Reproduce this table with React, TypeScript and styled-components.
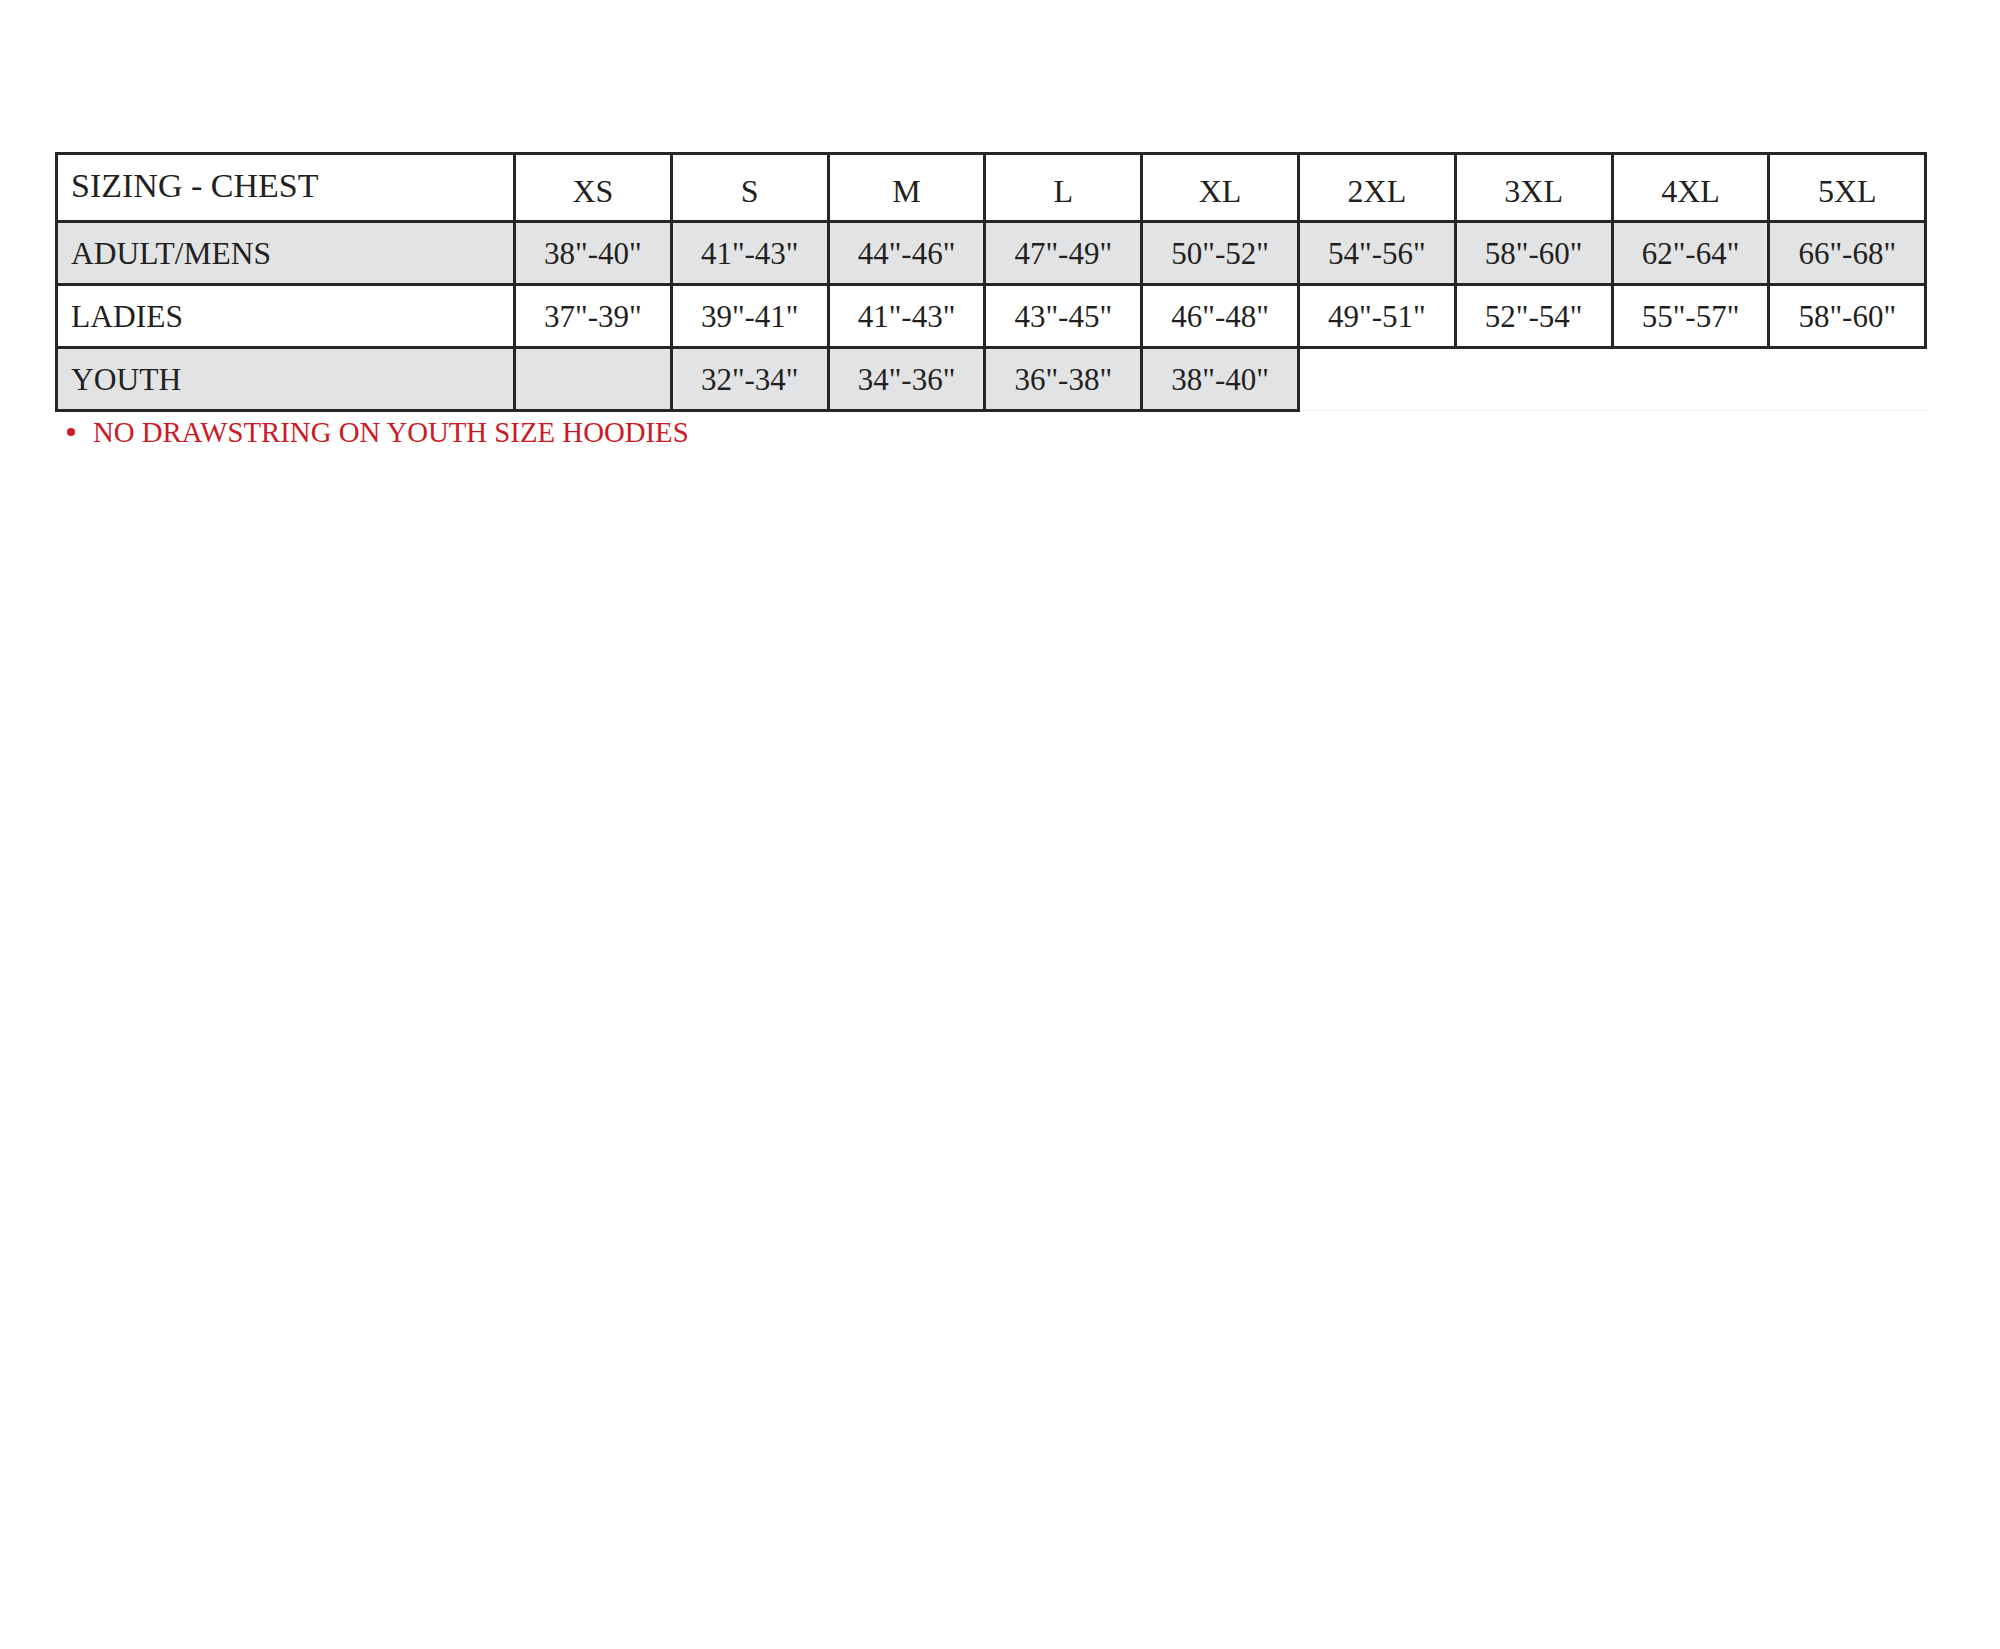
import { createGlobalStyle } from 'styled-components';
import styled from 'styled-components';

const sizes = ['XS', 'S', 'M', 'L', 'XL', '2XL', '3XL', '4XL', '5XL'];

const rows: { label: string; values: (string | null)[]; shaded: boolean }[] = [
  {
    label: 'ADULT/MENS',
    values: ['38"-40"', '41"-43"', '44"-46"', '47"-49"', '50"-52"', '54"-56"', '58"-60"', '62"-64"', '66"-68"'],
    shaded: true,
  },
  {
    label: 'LADIES',
    values: ['37"-39"', '39"-41"', '41"-43"', '43"-45"', '46"-48"', '49"-51"', '52"-54"', '55"-57"', '58"-60"'],
    shaded: false,
  },
  {
    label: 'YOUTH',
    values: ['', '32"-34"', '34"-36"', '36"-38"', '38"-40"', null, null, null, null],
    shaded: true,
  },
];

function App() {
  return (
    <>
      <GlobalStyle />
      <S.Page>
        <S.Table>
          <colgroup>
            <col style={{ width: 458 }} />
            {sizes.map((s) => (
              <col key={s} style={{ width: 156.8 }} />
            ))}
          </colgroup>
          <thead>
            <S.HeadRow>
              <S.LabelHead>SIZING - CHEST</S.LabelHead>
              {sizes.map((s) => (
                <S.SizeHead key={s}>{s}</S.SizeHead>
              ))}
            </S.HeadRow>
          </thead>
          <tbody>
            {rows.map((row) => (
              <S.Row key={row.label} $shaded={row.shaded}>
                <S.Label>{row.label}</S.Label>
                {row.values.map((v, i) =>
                  v === null ? <S.Blank key={i} /> : <S.Cell key={i}>{v}</S.Cell>,
                )}
              </S.Row>
            ))}
          </tbody>
        </S.Table>
        <S.Note>
          <S.Dot />
          NO DRAWSTRING ON YOUTH SIZE HOODIES
        </S.Note>
      </S.Page>
    </>
  );
}

export default App;

const GlobalStyle = createGlobalStyle`
  html, body {
    margin: 0;
    padding: 0;
    background: #ffffff;
  }
  body {
    font-family: "Liberation Serif", "Times New Roman", serif;
    color: #231f20;
  }
`;

const S = {
  Page: styled.div`
    width: 2000px;
    min-height: 1649px;
    box-sizing: border-box;
    padding: 152px 0 0 55px;
  `,
  Table: styled.table`
    border-collapse: collapse;
    table-layout: fixed;
    width: 1869px;
    font-family: "Liberation Serif", "Times New Roman", serif;
    color: #231f20;
  `,
  HeadRow: styled.tr`
    height: 68px;
    background: #ffffff;
  `,
  LabelHead: styled.th`
    border: 3px solid #262626;
    padding: 0 0 4px 13px;
    text-align: left;
    font-weight: normal;
    font-size: 34px;
  `,
  SizeHead: styled.th`
    border: 3px solid #262626;
    padding: 7px 0 0;
    text-align: center;
    font-weight: normal;
    font-size: 32px;
  `,
  Row: styled.tr<{ $shaded: boolean }>`
    height: 63px;
    background: ${(p) => (p.$shaded ? '#e2e3e5' : '#ffffff')};
  `,
  Label: styled.td`
    border: 3px solid #262626;
    padding: 2px 0 0 13px;
    text-align: left;
    font-size: 31.5px;
  `,
  Cell: styled.td`
    border: 3px solid #262626;
    padding: 2px 0 0;
    text-align: center;
    font-size: 31px;
  `,
  Blank: styled.td`
    border: none;
    border-bottom: 1px solid #f1f1f1;
    background: #ffffff;
  `,
  Note: styled.div`
    display: flex;
    align-items: center;
    gap: 18px;
    margin: 3px 0 0 12px;
    font-size: 28.8px;
    line-height: 34px;
    color: #cc1a26;
  `,
  Dot: styled.span`
    width: 8px;
    height: 8px;
    border-radius: 50%;
    background: #cc1a26;
  `,
};
